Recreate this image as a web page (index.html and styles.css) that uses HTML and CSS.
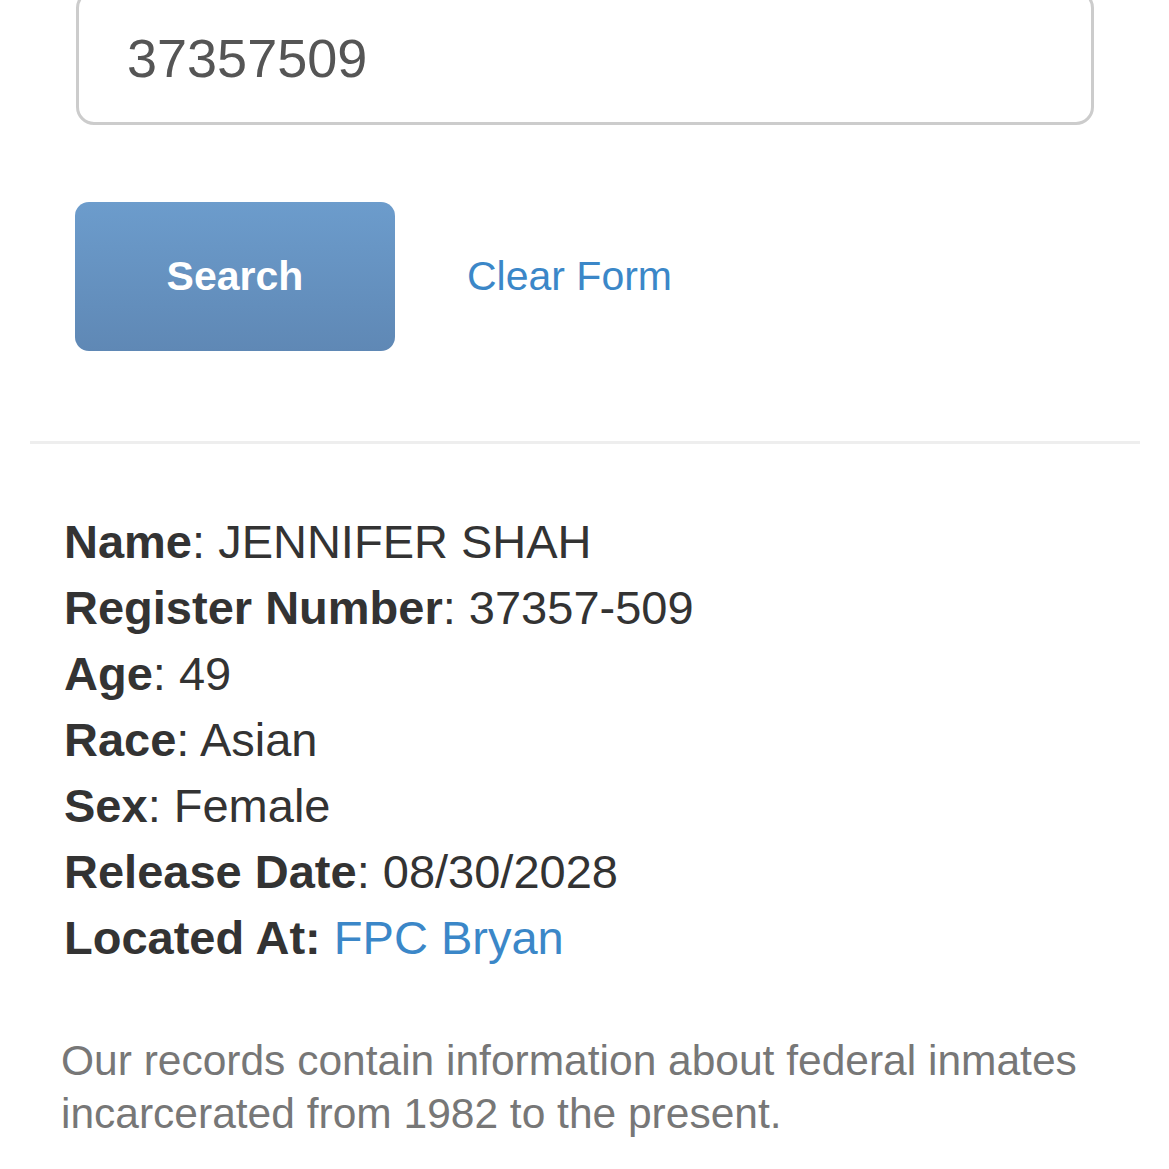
FILE: index.html
```html
<!DOCTYPE html>
<html>
<head>
<meta charset="utf-8">
<link rel="stylesheet" href="styles.css">
</head>
<body>
<div class="form">
  <div class="input">37357509</div>
  <div class="actions">
    <div class="btn">Search</div>
    <a class="clear" href="#">Clear Form</a>
  </div>
</div>
<div class="rule"></div>
<div class="info">
  <div class="row"><b>Name</b>: JENNIFER SHAH</div>
  <div class="row"><b>Register Number</b>: 37357-509</div>
  <div class="row"><b>Age</b>: 49</div>
  <div class="row"><b>Race</b>: Asian</div>
  <div class="row"><b>Sex</b>: Female</div>
  <div class="row"><b>Release Date</b>: 08/30/2028</div>
  <div class="row"><b>Located At:</b> <a class="link" href="#">FPC Bryan</a></div>
</div>
<p class="note">Our records contain information about federal inmates incarcerated from 1982 to the present.</p>
</body>
</html>
```
FILE: styles.css
```css
html, body {
  margin: 0;
  padding: 0;
  background: #fff;
  font-family: "Liberation Sans", Arial, sans-serif;
  overflow: hidden;
}
.form {
  padding: 0 75px 0 76px;
}
.input {
  margin-top: -10px;
  height: 135px;
  box-sizing: border-box;
  width: 1018px;
  border: 3px solid #cccccc;
  border-radius: 18px;
  padding-left: 48px;
  display: flex;
  align-items: center;
  font-size: 54px;
  color: #555555;
}
.actions {
  margin-top: 77px;
  display: flex;
  align-items: center;
  gap: 72px;
  margin-left: -1px;
}
.btn {
  width: 320px;
  height: 149px;
  border-radius: 14px;
  background: linear-gradient(#6c9ccc, #5f88b5);
  color: #fff;
  font-weight: bold;
  font-size: 41px;
  display: flex;
  align-items: center;
  justify-content: center;
}
.clear {
  color: #3b87c8;
  text-decoration: none;
  font-size: 41px;
}
.rule {
  margin: 90px 29px 0 30px;
  height: 3px;
  background: #eeeeee;
}
.info {
  margin-top: 65px;
  padding-left: 64px;
  font-size: 47px;
  line-height: 66px;
  color: #333333;
}
.link {
  color: #3b87c8;
  text-decoration: none;
}
.note {
  margin: 63px 60px 0 61px;
  font-size: 42.5px;
  line-height: 53px;
  color: #777777;
}
```
